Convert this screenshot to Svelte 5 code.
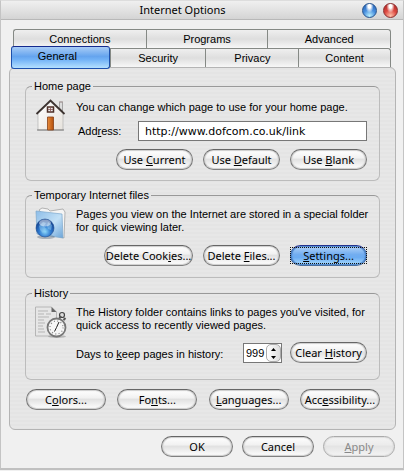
<script>
	let address = $state('http://www.dofcom.co.uk/link');
	let days = $state(999);
	let active = $state('General');

	const backTabs = ['Connections', 'Programs', 'Advanced'];
	const frontTabs = ['General', 'Security', 'Privacy', 'Content'];
</script>

{#snippet tab(name)}
	<button class="tab" class:active={active === name} role="tab" aria-selected={active === name} onclick={() => (active = name)}>{name}</button>
{/snippet}

<main class="dialog">
	<header>
		<h1>Internet Options</h1>
		<button class="orb blue" aria-label="Help"></button>
		<button class="orb red" aria-label="Close"></button>
	</header>

	<div class="tabs" role="tablist">
		<div class="back">
			{#each backTabs as name}{@render tab(name)}{/each}
		</div>
		<div class="front">
			{#each frontTabs as name}{@render tab(name)}{/each}
		</div>
	</div>

	<section class="panel">
		<fieldset class="home">
			<legend>Home page</legend>
			<svg class="icon" viewBox="0 0 32 32" aria-hidden="true">
				<defs>
					<linearGradient id="wall" x2="1" y2="1"><stop stop-color="#fff" /><stop offset="1" stop-color="#e6e2dc" /></linearGradient>
					<linearGradient id="door"><stop stop-color="#e88b3a" /><stop offset="1" stop-color="#b4500c" /></linearGradient>
				</defs>
				<path d="M24.500 3h3v9l-3-3z" fill="#ddd" stroke="#888" stroke-width=".7" />
				<path d="M24 3h4" stroke="#a99" />
				<path d="M3 14 15.500 3l12.500 11v17H3z" fill="url(#wall)" stroke="#aaa" stroke-width=".6" />
				<path d="M2 31h27" stroke="#777" />
				<path d="M1.500 15 15.500 1.500l14 13.500" fill="none" stroke="#3c3330" stroke-width="1.800" />
				<path d="M12.500 8h6v5h-6z" fill="#eee" stroke="#4d3029" stroke-width="1.500" />
				<path d="M13 10.500h5M15.500 8v5" stroke="#855" stroke-width=".8" />
				<path d="M12.500 18h6v13h-6z" fill="url(#door)" stroke="#874016" stroke-width=".8" />
			</svg>
			<div class="body">
				<p>You can change which page to use for your home page.</p>
				<div class="address">
					<label for="address">Add<u>r</u>ess:</label>
					<input id="address" type="text" bind:value={address} />
				</div>
				<div class="actions">
					<button class="pill">Use <u>C</u>urrent</button>
					<button class="pill">Use <u>D</u>efault</button>
					<button class="pill">Use <u>B</u>lank</button>
				</div>
			</div>
		</fieldset>

		<fieldset class="temp">
			<legend>Temporary Internet files</legend>
			<svg class="icon" viewBox="0 0 32 32" aria-hidden="true">
				<defs>
					<linearGradient id="folder" x2="1" y2="1"><stop stop-color="#8dbde8" /><stop offset=".55" stop-color="#c2e0f6" /><stop offset="1" stop-color="#6ba4d8" /></linearGradient>
					<radialGradient id="globe" cx=".5" cy=".7" r=".65"><stop stop-color="#8ed8fa" /><stop offset=".5" stop-color="#2e79cf" /><stop offset="1" stop-color="#123d88" /></radialGradient>
				</defs>
				<path d="M4 3l3-2 6 1 2 2 13-2 2 3-1 26-4-1z" fill="#f4f4f4" stroke="#999" stroke-width=".7" />
				<path d="M1 4l26 3 1 24-26-4z" fill="url(#folder)" stroke="#7da8cc" stroke-width=".7" />
				<ellipse cx="11" cy="30" rx="9" ry="2" fill="#567" opacity=".4" />
				<circle cx="10" cy="21" r="9" fill="url(#globe)" stroke="#1c4b91" stroke-width=".6" />
				<path d="M4 19l4-4 3 1-2 3 2 3-3 4-3-3zM13 15l4 3-1 5-3-1-1-3z" fill="#9ed4f5" opacity=".45" />
				<ellipse cx="10" cy="16" rx="6" ry="3.500" fill="#fff" opacity=".5" />
			</svg>
			<div class="body">
				<p>Pages you view on the Internet are stored in a special folder<br />for quick viewing later.</p>
				<div class="actions">
					<button class="pill wide">Delete Cook<u>i</u>es...</button>
					<button class="pill">Delete <u>F</u>iles...</button>
					<button class="pill primary"><u>S</u>ettings...</button>
				</div>
			</div>
		</fieldset>

		<fieldset class="history">
			<legend>History</legend>
			<svg class="icon" viewBox="0 0 32 32" aria-hidden="true">
				<path d="M.500 1h16l5 5v24h-21z" fill="#e6e6e6" stroke="#aaa" stroke-width=".8" />
				<path d="M16.500 1v5h5z" fill="#666" />
				<path d="M3 5h10M3 8h6M11 8h5M3 11h11M3 14h6M3 17h7M3 20h5M3 23h6M3 26h7" stroke="#b5b5b5" />
				<ellipse cx="22" cy="30.500" rx="9" ry="1.500" fill="#888" opacity=".5" />
				<circle cx="27" cy="9" r="2.500" fill="#ddd" stroke="#444" stroke-width="1.200" />
				<path d="M24 13l2-3M28.500 14l2-2" stroke="#555" stroke-width="2" />
				<circle cx="21.500" cy="21.500" r="9" fill="#f6f6f6" stroke="#777" stroke-width="1.800" />
				<circle cx="21.500" cy="21.500" r="6.500" fill="none" stroke="#888" stroke-width="1.300" stroke-dasharray="1 2.400" />
				<path d="M24 16l-2.500 5.500-2 4" fill="none" stroke="#222" />
			</svg>
			<div class="body">
				<p>The History folder contains links to pages you've visited, for<br />quick access to recently viewed pages.</p>
				<div class="days">
					<label for="days">Days to <u>k</u>eep pages in history:</label>
					<div class="spinner">
						<input id="days" type="text" inputmode="numeric" bind:value={days} />
						<div class="steps">
							<button aria-label="More days" onclick={() => days++}><svg viewBox="0 0 5 3"><path d="M2.500 0 5 3H0z" /></svg></button>
							<button aria-label="Fewer days" onclick={() => days--}><svg viewBox="0 0 5 3"><path d="M0 0h5L2.500 3z" /></svg></button>
						</div>
					</div>
					<button class="pill">Clear <u>H</u>istory</button>
				</div>
			</div>
		</fieldset>

		<div class="extras">
			<button class="pill">C<u>o</u>lors...</button>
			<button class="pill">Fo<u>n</u>ts...</button>
			<button class="pill"><u>L</u>anguages...</button>
			<button class="pill">Acc<u>e</u>ssibility...</button>
		</div>
	</section>

	<footer>
		<button class="pill">OK</button>
		<button class="pill">Cancel</button>
		<button class="pill" disabled><u>A</u>pply</button>
	</footer>
</main>

<style>
	:global(body) {
		margin: 0;
		background: #f0f0f0;
	}
	.dialog {
		box-sizing: border-box;
		border: 1px solid #c4c4c4;
		border-top-color: #ddd;
		border-bottom: 2px solid #c0c0c0;
		background: #f0f0f0;
		color: #000;
		font: 11px/13px "Liberation Sans", Arial, sans-serif;
	}
	button, input {
		box-sizing: border-box;
		margin: 0;
		padding: 0;
		color: inherit;
		font: inherit;
	}
	header {
		display: flex;
		align-items: center;
		gap: 6px;
		height: 18px;
		padding: 0 5px 0 8px;
		border-bottom: 1px solid #b8b8b8;
		background: linear-gradient(#f0f0f0, #d4d4d4);
	}
	h1 {
		flex: 1;
		margin: 0;
		font: 11px/16px "Noto Sans", sans-serif;
		text-align: center;
	}
	.orb {
		width: 15px;
		height: 15px;
		border: 1px solid #27548e;
		border-radius: 50%;
		background: radial-gradient(ellipse at 50% 15%, #fff 0 15%, transparent 45%), radial-gradient(circle at 50% 90%, #b8f0ff, #4a90de 45%, #1c58ae);
	}
	.orb.red {
		border-color: #8a3030;
		background: radial-gradient(ellipse at 50% 15%, #fff 0 15%, transparent 45%), radial-gradient(circle at 50% 90%, #ffc0a8, #dc4a42 45%, #a81c1c);
	}
	.tabs {
		padding: 9px 12px 0;
	}
	.back, .front {
		display: grid;
		grid-template-columns: 133fr 122fr 124fr;
	}
	.front {
		grid-template-columns: 97fr 96fr 93fr 93fr;
	}
	.tab {
		height: 19px;
		border: solid #858985;
		border-width: 1px 0 0 1px;
		background: linear-gradient(#efefef, #dedede 50%, #f7f7f7);
	}
	.tab:last-child {
		border-right-width: 1px;
		border-top-right-radius: 3px;
	}
	.back .tab:first-child {
		border-top-left-radius: 3px;
	}
	.tab.active {
		height: 23px;
		margin: -2px 0 -2px -2px;
		padding: 0 6px 2px 0;
		border: 1px solid #1c50ac;
		border-top-color: #142a8e;
		border-radius: 3px;
		background: linear-gradient(#a8ccf6, #65a4ee 45%, #72b2f6 60%, #b4e0ff);
	}
	.panel {
		margin: 0 7px 0 8px;
		padding: 12px 15px 19px;
		border: 1px solid #b4b4b4;
		border-radius: 6px;
		background: repeating-linear-gradient(#e4e4e4 0 2px, #e7e7e7 2px 4px);
	}
	fieldset {
		display: flex;
		min-width: 0;
		margin: 0 0 9px;
		padding: 0 12px 0 9px;
		border: 1px solid #bcbcbc;
		border-top-color: #999;
		border-radius: 6px;
	}
	legend {
		height: 13px;
		margin-left: -3px;
		padding: 0 2px;
	}
	.home {
		margin-bottom: 8px;
		padding-bottom: 10px;
	}
	.temp {
		padding-bottom: 11px;
	}
	.history {
		padding-bottom: 16px;
	}
	.icon {
		flex: none;
		width: 32px;
		height: 32px;
		margin: 6px 9px 0 0;
	}
	.temp .icon {
		margin-top: 5px;
	}
	.body {
		flex: 1;
		min-width: 0;
	}
	p {
		margin: 6px 0 0;
		white-space: nowrap;
	}
	.home p {
		margin-top: 8px;
	}
	u {
		text-underline-offset: 1px;
	}
	.address, .days {
		display: flex;
		align-items: center;
	}
	.address {
		margin-top: 7px;
	}
	.address label {
		width: 60px;
		padding-left: 2px;
	}
	input {
		border: 1px solid #777;
		background: #fff;
	}
	#address {
		flex: 1;
		min-width: 0;
		height: 20px;
		padding-left: 6px;
		font: 11px/16px "DejaVu Sans", sans-serif;
	}
	.actions {
		display: flex;
		justify-content: flex-end;
		gap: 10px;
		margin-top: 8px;
	}
	.temp .actions {
		margin-top: 11px;
	}
	.pill {
		width: 77px;
		height: 21px;
		border: 1px solid #666;
		border-color: #666 #777 #808080;
		border-radius: 11px;
		box-shadow: inset 0 0 1px 1px #ccc;
		background: linear-gradient(#fff, #f2f2f2 40%, #e2e2e2 50%, #fff);
		font: 11px/16px "Noto Sans", sans-serif;
		white-space: nowrap;
	}
	.wide {
		width: 89px;
	}
	.primary {
		position: relative;
		border-color: #26348e #3565a8 #496f9e;
		box-shadow: inset 0 0 1px 1px #4b84cc;
		background: linear-gradient(#b4d4f8, #72adf0 45%, #6cacf2 60%, #a8dcff);
	}
	/* focus rectangle stays square over the rounded button */
	.primary::after {
		position: absolute;
		inset: 1px -1px;
		border: 1px dotted #111;
		content: '';
	}
	.pill:disabled {
		border-color: #aaa;
		box-shadow: inset 0 0 1px 1px #ddd;
		background: linear-gradient(#f4f4f4, #ececec 40%, #e4e4e4 50%, #f4f4f4);
		color: #888;
	}
	.days {
		align-items: flex-end;
		margin-top: 10px;
	}
	.days label {
		flex: 1;
		padding-bottom: 2px;
	}
	.spinner {
		display: flex;
		width: 39px;
		height: 20px;
		margin-right: 8px;
		box-sizing: border-box;
		border: 1px solid #777;
		background: #fff;
	}
	#days {
		width: 22px;
		padding-left: 2px;
		border: 0;
	}
	.steps {
		display: flex;
		flex: 1;
		flex-direction: column;
		border: 1px solid #aaa;
		border-radius: 5px;
		background: linear-gradient(90deg, #fff, #ddd);
	}
	.steps button {
		display: grid;
		flex: 1;
		place-items: center;
		border: 0;
		background: none;
	}
	.steps svg {
		width: 5px;
		height: 3px;
	}
	.extras {
		display: flex;
		justify-content: space-between;
		padding: 0 0 0 1px;
	}
	.extras .pill {
		width: 80px;
	}
	footer {
		display: flex;
		justify-content: flex-end;
		gap: 9px;
		padding: 6px 8px 11px;
	}
	footer .pill {
		width: 72px;
	}
</style>
